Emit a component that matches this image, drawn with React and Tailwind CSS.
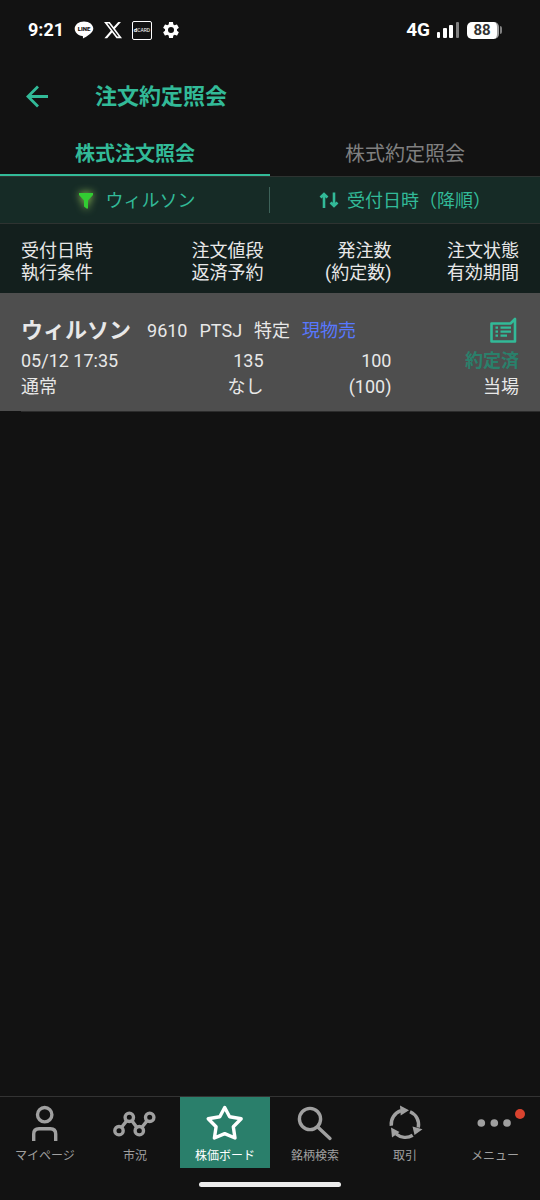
const GREEN = "#32ba98";

const columns = [
  { top: "受付日時", bottom: "執行条件", className: "w-[29%] pl-[21px] text-left" },
  { top: "注文値段", bottom: "返済予約", className: "w-[20%] pr-px text-right" },
  { top: "発注数", bottom: "(約定数)", className: "w-[23.5%] text-right" },
  { top: "注文状態", bottom: "有効期間", className: "pr-[21px] text-right" },
];

const orders = [
  {
    id: 1,
    name: "ウィルソン",
    code: "9610",
    market: "PTSJ",
    account: "特定",
    side: "現物売",
    date: "05/12 17:35",
    condition: "通常",
    price: "135",
    repay: "なし",
    quantity: "100",
    filled: "(100)",
    status: "約定済",
    term: "当場",
  },
];

function NavIcon({ children }) {
  return (
    <svg
      viewBox="0 0 48 40"
      className="h-10 w-12"
      fill="none"
      stroke="currentColor"
      strokeWidth="3.4"
      strokeLinejoin="round"
      aria-hidden="true"
    >
      {children}
    </svg>
  );
}

const navItems = [
  {
    label: "マイページ",
    icon: (
      <NavIcon>
        <circle cx="23.7" cy="11.7" r="7.2" />
        <path d="M12.7 38V31Q12.7 25.7 18 25.7H29.4Q34.7 25.7 34.7 31V38" />
      </NavIcon>
    ),
  },
  {
    label: "市況",
    icon: (
      <NavIcon>
        <path d="M10.6 24.3L15.7 17.7M20.9 17.7L25.7 24.3M30.9 24.3L36.1 17.7" />
        <circle cx="8" cy="27.7" r="4.2" />
        <circle cx="18.3" cy="14.3" r="4.2" />
        <circle cx="28.3" cy="27.7" r="4.2" />
        <circle cx="38.7" cy="14.3" r="4.2" />
      </NavIcon>
    ),
  },
  {
    label: "株価ボード",
    active: true,
    icon: (
      <NavIcon>
        <path d="M23.7 4.5L28.6 13.8L40.2 15.7L32.3 23.7L34 35L23.7 30.6L13.4 35L15.1 23.7L7.2 15.7L18.8 13.8Z" />
      </NavIcon>
    ),
  },
  {
    label: "銘柄検索",
    icon: (
      <NavIcon>
        <circle cx="19" cy="16" r="10.6" />
        <path d="M26.7 24L39 35.4" strokeLinecap="round" />
      </NavIcon>
    ),
  },
  {
    label: "取引",
    icon: (
      <NavIcon>
        <path d="M10.3 22.7A14 14 0 0 1 20 7.7M29 8.7A14 14 0 0 1 37.3 24.5M31.7 32.3A14 14 0 0 1 15.2 31" />
        <path d="M19 2.5L28 7.3L19.7 12.5ZM41.5 26.3L33.5 32L31.5 23.5ZM10 24.5L18.5 29L11 34.5Z" fill="currentColor" stroke="none" />
      </NavIcon>
    ),
  },
  {
    label: "メニュー",
    badge: true,
    icon: (
      <NavIcon>
        <g fill="currentColor" stroke="none">
          <circle cx="10.3" cy="20" r="3.8" />
          <circle cx="23.3" cy="20" r="3.8" />
          <circle cx="36" cy="20" r="3.8" />
        </g>
      </NavIcon>
    ),
  },
];

function StatusBar() {
  return (
    <div className="flex h-[60px] items-center justify-between pr-[38px] pl-[28px] text-white">
      <div className="flex items-center">
        <span className="w-[46px] text-[18px] leading-6 font-bold">9:21</span>
        <svg viewBox="0 0 20 18" className="h-[18px] w-5" role="img" aria-label="LINE">
          <path
            d="M10 .5C4.7.5.7 3.7.7 7.8c0 3.7 3.3 6.7 7.7 7.2.7.2.7.7.5 2.6 3.2-1.7 10.4-5.6 10.4-9.8C19.3 3.7 15.3.5 10 .5Z"
            fill="white"
          />
          <text x="10" y="10.3" textAnchor="middle" fontSize="6" fontWeight="900" fill="#121212">
            LINE
          </text>
        </svg>
        <svg viewBox="0 0 24 24" className="ml-[9px] h-5 w-5" fill="white" aria-hidden="true">
          <path d="M18.244 2.25h3.308l-7.227 8.26 8.502 11.24H16.17l-5.214-6.817L4.99 21.75H1.68l7.73-8.835L1.254 2.25H8.08l4.713 6.231zm-1.161 17.52h1.833L7.084 4.126H5.117z" />
        </svg>
        <span className="ml-[9px] flex h-[19px] w-5 items-center justify-center rounded-xs border border-white text-[5px] leading-none">
          <b className="text-[6px]">d</b>CARD
        </span>
        <svg viewBox="0 0 24 24" className="ml-[9px] h-5 w-5" fill="white" aria-hidden="true">
          <path d="M19.14 12.94c.04-.3.06-.61.06-.94 0-.32-.02-.64-.07-.94l2.03-1.58c.18-.14.23-.41.12-.61l-1.92-3.32c-.12-.22-.37-.29-.59-.22l-2.39.96c-.5-.38-1.03-.7-1.62-.94l-.36-2.54c-.04-.24-.24-.41-.48-.41h-3.84c-.24 0-.43.17-.47.41l-.36 2.54c-.59.24-1.13.57-1.62.94l-2.39-.96c-.22-.08-.47 0-.59.22L2.74 8.87c-.12.21-.08.47.12.61l2.03 1.58c-.05.3-.09.63-.09.94s.02.64.07.94l-2.03 1.58c-.18.14-.23.41-.12.61l1.92 3.32c.12.22.37.29.59.22l2.39-.96c.5.38 1.03.7 1.62.94l.36 2.54c.05.24.24.41.48.41h3.84c.24 0 .44-.17.47-.41l.36-2.54c.59-.24 1.13-.56 1.62-.94l2.39.96c.22.08.47 0 .59-.22l1.92-3.32c.12-.22.07-.47-.12-.61zM12 15.6a3.6 3.6 0 1 1 0-7.2 3.6 3.6 0 0 1 0 7.2z" />
        </svg>
      </div>
      <div className="flex items-center">
        <span className="text-[19px] leading-6 font-bold">4G</span>
        <svg viewBox="0 0 24 18" className="ml-[6px] h-[18px] w-6" fill="white" aria-hidden="true">
          <rect x="1" y="11" width="3" height="6" rx="1" />
          <rect x="7" y="7" width="4" height="10" rx="1" />
          <rect x="13" y="4" width="4" height="13" rx="1" />
          <rect x="20" y="1" width="3" height="16" rx="1" fill="#808080" />
        </svg>
        <span className="ml-[7px] flex h-[17px] w-8 items-center justify-center rounded-[5px] border-r-2 border-[#a0a0a0] bg-white text-[15px] leading-none font-bold text-[#333333]">
          88
        </span>
        <span className="ml-px h-2 w-[2px] rounded-r-sm bg-[#808080]" />
      </div>
    </div>
  );
}

function Header() {
  return (
    <header className="flex h-[72px] items-center pl-[26px] text-[#32ba98]">
      <button type="button" aria-label="戻る" className="mr-[46px]">
        <svg viewBox="0 0 23 23" className="h-[23px] w-[23px]" fill="none" stroke={GREEN} strokeWidth="2.8">
          <path d="M22 11.5H2.5M12 1.5L2 11.5L12 21.5" />
        </svg>
      </button>
      <h1 className="pt-[2px] text-[22px] leading-8 font-bold">注文約定照会</h1>
    </header>
  );
}

function Tabs() {
  return (
    <div role="tablist" className="grid grid-cols-2 border-b border-[#2e3331] text-[20px] leading-10">
      <button type="button" role="tab" aria-selected="true" className="border-b-2 border-[#32ba98] pt-[2px] font-bold text-[#32ba98]">
        株式注文照会
      </button>
      <button type="button" role="tab" aria-selected="false" className="border-b-2 border-transparent pt-[2px] text-[#808080]">
        株式約定照会
      </button>
    </div>
  );
}

function FilterBar() {
  return (
    <div className="grid h-[47px] grid-cols-2 items-center border-b border-[#2e3331] bg-[#162b26] text-[18px] leading-6 text-[#32ba98]">
      <button type="button" className="flex items-center justify-center gap-2 border-r border-[#3d6259]">
        <svg viewBox="0 0 24 24" className="h-6 w-6 drop-shadow-[0_0_4px_#a6d860]" fill="#32cd32" aria-hidden="true">
          <path d="M5 5H19V7L14 12.5V20.5H12.5L10 18.5V12.5L5 7Z" />
        </svg>
        <span className="pt-[2px]">ウィルソン</span>
      </button>
      <button type="button" className="flex items-center justify-center gap-2">
        <svg viewBox="0 0 20 18" className="h-[18px] w-5" fill="none" stroke={GREEN} strokeWidth="2.6" aria-hidden="true">
          <path d="M5 17V3M1.5 6.500L5 3L8.500 6.500M15 1.500V15M11.500 11.500L15 15L18.500 11.500" />
        </svg>
        <span className="pt-[2px]">受付日時（降順）</span>
      </button>
    </div>
  );
}

function OrderRows({ order }) {
  return (
    <tbody className="bg-[#4e4e4e] leading-[26px]">
      <tr>
        <td colSpan={4} className="px-[21px] pt-5">
          <div className="flex h-[35px] items-center">
            <span className="mr-4 text-[22px] font-bold">{order.name}</span>
            <span className="flex gap-3">
              <span>{order.code}</span>
              <span>{order.market}</span>
              <span>{order.account}</span>
              <span className="text-[#5878ff]">{order.side}</span>
            </span>
            <button type="button" aria-label="注文詳細" className="ml-auto">
              <svg viewBox="0 0 30 28" className="h-7 w-[30px]" fill="none" stroke={GREEN} strokeWidth="2.6" aria-hidden="true">
                <path d="M2.5 6.500H21.500L26 2V24.500H2.500Z" strokeLinejoin="round" />
                <path d="M6.500 10.700H9M11.500 10.700H22M6.500 14.700H9M11.500 14.700H22M6.500 18.700H9M11.500 18.700H18" strokeWidth="2.2" />
              </svg>
            </button>
          </div>
        </td>
      </tr>
      <tr>
        <td className="pb-[11px] pl-[21px]">
          <div>{order.date}</div>
          <div>{order.condition}</div>
        </td>
        <td className="pr-px pb-[11px] text-right">
          <div>{order.price}</div>
          <div>{order.repay}</div>
        </td>
        <td className="pb-[11px] text-right">
          <div>{order.quantity}</div>
          <div>{order.filled}</div>
        </td>
        <td className="pr-[21px] pb-[11px] text-right">
          <div className="font-bold text-[#2a806b]">{order.status}</div>
          <div>{order.term}</div>
        </td>
      </tr>
    </tbody>
  );
}

function BottomNav() {
  return (
    <nav className="grid grid-cols-6 border-t border-[#333333]">
      {navItems.map((item) => (
        <button
          key={item.label}
          type="button"
          className={`relative flex h-[71px] flex-col items-center gap-[5px] pt-[6px] text-[12px] leading-4 ${
            item.active ? "bg-[#2a7f6b] text-white" : "text-[#a0a0a0]"
          }`}
        >
          {item.icon}
          <span>{item.label}</span>
          {item.badge && <span className="absolute top-3 right-[15px] h-[10px] w-[10px] rounded-full bg-[#d9432f]" />}
        </button>
      ))}
    </nav>
  );
}

export default function App() {
  return (
    <div className="flex min-h-screen flex-col bg-[#121212] font-[Roboto,'Noto_Sans_CJK_JP',sans-serif] text-[#e8e8e8]" lang="ja">
      <StatusBar />
      <Header />
      <Tabs />
      <FilterBar />
      <main className="flex-1">
        <table className="w-full table-fixed text-[18px]">
          <thead className="bg-[#131f1d] leading-[22px]">
            <tr>
              {columns.map((col) => (
                <th key={col.top} className={`pt-4 pb-[9px] font-normal ${col.className}`}>
                  <div>{col.top}</div>
                  <div>{col.bottom}</div>
                </th>
              ))}
            </tr>
          </thead>
          {orders.map((order) => (
            <OrderRows key={order.id} order={order} />
          ))}
        </table>
        <div className="ml-[21px] border-t border-[#2c2c2c]" />
      </main>
      <BottomNav />
      <div className="flex h-8 items-center justify-center">
        <div className="h-[5px] w-[142px] rounded-full bg-[#ececec]" />
      </div>
    </div>
  );
}
